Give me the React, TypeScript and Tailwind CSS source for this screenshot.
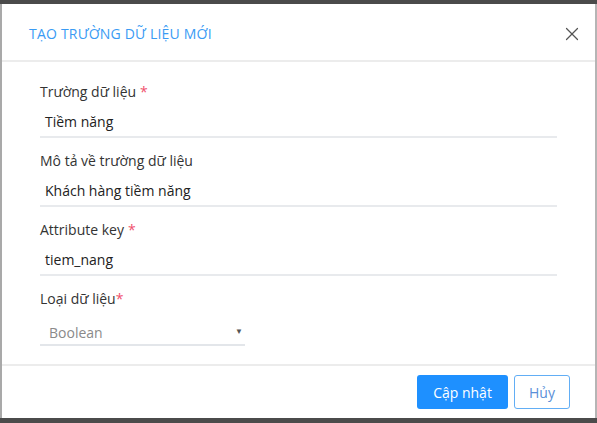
import { X } from 'lucide-react';

function Field({ label, value, required }: { label: string; value: string; required?: boolean }) {
  return (
    <div>
      <label className="block h-[18px] text-[14px] leading-[18px] text-[#333]">
        {label}
        {required && <span className="ml-1 text-[#f0506e]">*</span>}
      </label>
      <div className="mt-[12px] h-[25px] border-b-2 border-[#e8eaed] pl-[5px] text-[14px] leading-[18px] text-[#222]">
        {value}
      </div>
    </div>
  );
}

export default function App() {
  return (
    <div className="flex h-[423px] w-[597px] flex-col bg-[#4b4b4b] font-['Open_Sans',sans-serif]">
      <div className="h-[4px] shrink-0" />
      <div className="flex flex-1">
        <div className="w-[2px] bg-[#a9a9a9]" />
        <div className="flex flex-1 flex-col bg-white">
          {/* Header */}
          <div className="flex h-[58px] items-center justify-between border-b-2 border-[#ececec] pl-[27px] pr-[12px] pt-[3px]">
            <h2 className="text-[14px] tracking-[0.2px] text-[#3a9bf4]">TẠO TRƯỜNG DỮ LIỆU MỚI</h2>
            <X className="h-[22px] w-[22px] text-[#555]" strokeWidth={1.3} />
          </div>

          {/* Body */}
          <div className="flex flex-1 flex-col gap-[14px] px-[38px] pt-[21px]">
            <Field label="Trường dữ liệu" value="Tiềm năng" required />
            <Field label="Mô tả về trường dữ liệu" value="Khách hàng tiềm năng" />
            <Field label="Attribute key" value="tiem_nang" required />
            <div>
              <label className="block h-[18px] text-[14px] leading-[18px] text-[#333]">
                Loại dữ liệu<span className="text-[#f0506e]">*</span>
              </label>
              <div className="mt-[12px] flex h-[26px] w-[205px] items-end justify-between border-b-2 border-[#e3e6ea] pb-[1px] pl-[9px] pr-[2px] text-[14px] text-[#8a8a8a]">
                <span>Boolean</span>
                <span className="mb-[6px] text-[8px] text-[#555]">▼</span>
              </div>
            </div>
          </div>

          {/* Footer */}
          <div className="flex h-[54px] items-center justify-end gap-[6px] border-t-2 border-[#ececec] pr-[25px]">
            <button className="h-[34px] w-[91px] rounded-[3px] bg-[#1e90ff] text-[14px] text-white">Cập nhật</button>
            <button className="h-[34px] w-[56px] rounded-[3px] border border-[#62aef5] bg-white text-[14px] text-[#5a8fd8]">Hủy</button>
          </div>
        </div>
        <div className="w-[2px] bg-[#b5b5b5]" />
      </div>
      <div className="h-[5px] shrink-0" />
    </div>
  );
}
